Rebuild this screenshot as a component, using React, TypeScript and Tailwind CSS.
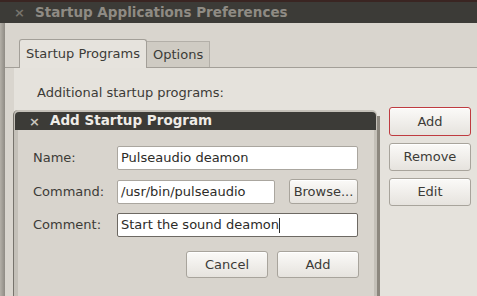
import React from "react";

const btn =
  "flex items-center justify-center rounded-[3px] border border-[#a8a49c] bg-gradient-to-b from-[#fbfaf8] to-[#e6e3de] text-[13px] text-[#3c3b37] shadow-[inset_0_1px_0_#ffffff]";

export default function App() {
  return (
    <div className="relative w-[477px] h-[296px] overflow-hidden bg-[#d9d5ce] font-['DejaVu_Sans',sans-serif] text-[#3c3b37] flex flex-col">
      {/* outer title bar */}
      <div className="h-[23px] shrink-0 border-t-[2px] border-[#3a2522] bg-[#3c3b37] flex items-center">
        <span className="ml-[14px] w-[10px] text-[13px] font-bold leading-none text-[#77736c]">×</span>
        <span className="ml-[11px] text-[13.5px] font-bold leading-none text-[#8f8b84]">
          Startup Applications Preferences
        </span>
      </div>
      {/* body */}
      <div className="flex flex-1 min-h-0">
        <div className="w-[5px] shrink-0 bg-gradient-to-r from-[#b4b0a8] to-[#8f8b84]" />
        <div className="flex-1 flex flex-col pt-[16px]">
          {/* tabs */}
          <div className="flex items-end pl-[14px] h-[29px] border-b border-[#a39f98]">
            <div className="h-[29px] px-[6px] -mb-px flex items-center border border-b-0 border-[#a39f98] rounded-t-[3px] bg-[#e6e3dd] text-[13px]">
              Startup Programs
            </div>
            <div className="h-[26px] px-[6px] flex items-center border border-l-0 border-b-0 border-[#b3afa8] bg-[#cfcbc3] text-[13px]">
              Options
            </div>
          </div>
          {/* notebook content */}
          <div className="flex-1 ml-[9px] bg-[#e5e2dc] flex flex-col pt-[17px]">
            <div className="pl-[23px] text-[13px] leading-[16px]">Additional startup programs:</div>
            <div className="flex flex-1 mt-[6px]">
              <div className="flex-1" />
              <div className="w-[82px] mr-[6px] flex flex-col gap-[7px]">
                <div className={btn + " h-[29px] !border-[#bf3b40]"}>Add</div>
                <div className={btn + " h-[28px]"}>Remove</div>
                <div className={btn + " h-[28px]"}>Edit</div>
              </div>
            </div>
          </div>
        </div>
      </div>

      {/* Add Startup Program dialog (window over the other window) */}
      <div className="absolute left-[13px] top-[110px] w-[367px] h-[200px] flex">
        <div className="flex-1 flex flex-col rounded-t-[5px] border-l border-[#77736c] bg-[#c4c0b8] pt-[2px] pl-[1px]">
          <div className="h-[18px] mr-[1px] rounded-t-[4px] bg-[#3c3b37] flex items-center shrink-0">
            <span className="ml-[14px] w-[10px] text-[13px] font-bold leading-none text-[#c9c5be]">×</span>
            <span className="ml-[11px] text-[13.5px] font-bold leading-none text-[#efece7]">
              Add Startup Program
            </span>
          </div>
          <div className="flex-1 ml-[3px] mr-[3px] bg-[#d8d4cd] flex flex-col pt-[16px] pl-[15px] pr-[16px] text-[13px]">
            <div className="flex items-center h-[24px]">
              <div className="w-[84px]">Name:</div>
              <div className="flex-1 h-[24px] flex items-center pl-[3px] bg-white border border-[#aaa69f] rounded-[2px] text-[#2c2b28]">
                Pulseaudio deamon
              </div>
            </div>
            <div className="flex items-center h-[25px] mt-[9px]">
              <div className="w-[84px]">Command:</div>
              <div className="w-[158px] h-[24px] flex items-center pl-[3px] bg-white border border-[#aaa69f] rounded-[2px] text-[#2c2b28]">
                /usr/bin/pulseaudio
              </div>
              <div className="flex-1" />
              <div className={btn + " w-[69px] h-[25px]"}>Browse...</div>
            </div>
            <div className="flex items-center h-[24px] mt-[9px]">
              <div className="w-[84px]">Comment:</div>
              <div className="flex-1 h-[24px] flex items-center pl-[3px] bg-white border border-[#6d6963] rounded-[2px] text-[#2c2b28]">
                Start the sound deamon
                <span className="inline-block w-px h-[15px] bg-[#2c2b28]" />
              </div>
            </div>
            <div className="flex justify-end gap-[9px] mt-[14px] mr-[-1px]">
              <div className={btn + " w-[82px] h-[27px]"}>Cancel</div>
              <div className={btn + " w-[82px] h-[27px]"}>Add</div>
            </div>
          </div>
        </div>
        <div className="w-[3px] mt-[6px] bg-[#8c877e]" />
      </div>
    </div>
  );
}
